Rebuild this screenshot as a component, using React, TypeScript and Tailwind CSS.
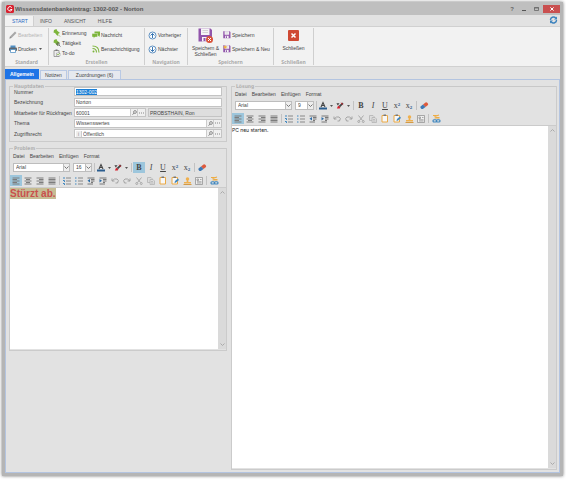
import { useEffect, useRef } from "react";
import clsx from "clsx";

const RIBBON_TABS = ["START", "INFO", "ANSICHT", "HILFE"];
const PAGES = ["Allgemein", "Notizen", "Zuordnungen (6)"];
const EDITOR_MENU = ["Datei", "Bearbeiten", "Einfügen", "Format"];

export default function App() {
  return (
    <div className="h-screen bg-white pt-[2px] pr-[3px] pb-[4px] pl-[2px] font-['Liberation_Sans',Arial,sans-serif] text-[5px] leading-[6px] text-[#444]">
      <div className="flex h-full flex-col border-x-[3px] border-b-[3px] border-[#b5b5b5] bg-[#e2e2e2] shadow-[0_0_3px_#777]">
        <TitleBar />
        <RibbonTabs />
        <Ribbon />
        <PageTabs />
        <main className="flex min-h-0 flex-1 gap-1 border border-[#b3c4e0] pt-[3px] pr-[2px] pb-[2px] pl-[3px]">
          <div className="flex w-[218px] shrink-0 flex-col gap-[3px]">
            <MasterData />
            <Panel title="Problem" className="h-[206px]">
              <Editor name="Problem" size="16" bold>
                <div
                  contentEditable
                  suppressContentEditableWarning
                  role="textbox"
                  aria-label="Problem"
                  className="min-w-0 flex-1 bg-white text-[10px] leading-3 font-bold text-[#c9504c] outline-none"
                >
                  <span className="bg-[#c6bd94]">Stürzt ab.</span>
                </div>
              </Editor>
            </Panel>
          </div>
          <Panel title="Lösung" className="min-w-0 flex-1">
            <Editor name="Lösung" size="9">
              <textarea
                aria-label="Lösung"
                defaultValue="PC neu starten."
                className="min-w-0 flex-1 resize-none bg-white pt-px font-[Inter,sans-serif] text-[5px] leading-[6px] text-[#222] outline-none"
              />
            </Editor>
          </Panel>
        </main>
      </div>
    </div>
  );
}

function TitleBar() {
  return (
    <header className="flex h-[13px] shrink-0 items-center bg-[#bfbfbf]">
      <svg width="8" height="8" viewBox="0 0 16 16" className="mr-px ml-px" aria-hidden="true">
        <rect width="16" height="16" rx="3" fill="#d8202f" />
        <path d="M11.5 5.2A4.3 4.3 0 1 0 12 9H8.5" fill="none" stroke="#fff" strokeWidth="2" />
      </svg>
      <h1 className="flex-1 text-[6px] font-bold text-[#555]">
        Wissensdatenbankeintrag: 1302-002 - Norton
      </h1>
      <button type="button" aria-label="Hilfe" className="w-3 text-[6px] font-bold text-[#666]">
        ?
      </button>
      <button type="button" aria-label="Minimieren" className="grid w-3 place-items-center">
        <svg width="4" height="6" aria-hidden="true">
          <path d="M0 4.5h4" stroke="#555" />
        </svg>
      </button>
      <button type="button" aria-label="Maximieren" className="grid w-[13px] place-items-center">
        <svg width="5" height="4" aria-hidden="true">
          <path d="M.5.5h4v3h-4zM0 1h5" fill="none" stroke="#666" strokeWidth=".8" />
        </svg>
      </button>
      <button
        type="button"
        aria-label="Fenster schließen"
        className="grid h-2 w-[17px] place-items-center bg-[#c94f4f]"
      >
        <svg width="4" height="4" viewBox="0 0 4 4" aria-hidden="true">
          <path d="M.4.4l3.2 3.2M3.6.4L.4 3.6" stroke="#fff" />
        </svg>
      </button>
    </header>
  );
}

function RibbonTabs() {
  return (
    <nav className="flex h-[11px] shrink-0 items-end justify-between">
      <div className="flex">
        {RIBBON_TABS.map((tab, i) => (
          <button
            key={tab}
            type="button"
            className={clsx(
              "h-[10px]",
              i === 0
                ? "border-r border-[#d0d0d0] bg-[#f2f2f2] pr-[5px] pl-[7px] text-[#2b6cc4]"
                : "px-[6px] text-[#555]"
            )}
          >
            {tab}
          </button>
        ))}
      </div>
      <button type="button" aria-label="Aktualisieren" className="mr-[2px] mb-[2px]">
        <svg width="9" height="8" viewBox="0 0 18 16" fill="none" stroke="#3b82bd" strokeWidth="2.8" aria-hidden="true">
          <path d="M3 8a6 5.5 0 0 1 10.5-4M15 8a6 5.5 0 0 1-10.5 4" />
          <path d="M16 1v6h-6zM2 15V9h6z" fill="#3b82bd" stroke="none" />
        </svg>
      </button>
    </nav>
  );
}

function Ribbon() {
  return (
    <div className="flex h-[41px] shrink-0 border-y border-[#d0d0d0] bg-[#f2f2f2] py-px">
      <Group label="Standard" className="w-[44px]">
        <Column className="pl-1">
          <Action icon={<Pencil />} label="Bearbeiten" tall disabled />
          <Action icon={<Printer />} label="Drucken" tall menu />
        </Column>
      </Group>
      <Group label="Erstellen" className="w-[96px]">
        <Column className="w-[43px] pl-1">
          <Action icon={<Pin />} label="Erinnerung" />
          <Action icon={<Pin search />} label="Tätigkeit" />
          <Action icon={<Todo />} label="To-do" />
        </Column>
        <Column>
          <Action icon={<Bubbles />} label="Nachricht" tall />
          <Action icon={<Feed />} label="Benachrichtigung" tall />
        </Column>
      </Group>
      <Group label="Navigation" className="w-[43px]">
        <Column className="pl-[3px]">
          <Action icon={<CircleArrow />} label="Vorheriger" tall />
          <Action icon={<CircleArrow down />} label="Nächster" tall />
        </Column>
      </Group>
      <Group label="Speichern" className="w-[86px]">
        <button type="button" className="flex w-[35px] flex-col items-center gap-[2px]">
          <Floppy size={15} badge="close" />
          <span className="w-[30px]">Speichern &amp; Schließen</span>
        </button>
        <Column>
          <Action icon={<Floppy size={8} />} label="Speichern" tall />
          <Action icon={<Floppy size={8} badge="new" />} label="Speichern & Neu" tall />
        </Column>
      </Group>
      <Group label="Schließen" className="w-[40px]">
        <button type="button" className="flex w-full flex-col items-center gap-1 pt-[2px]">
          <svg width="11" height="11" viewBox="0 0 22 22" aria-hidden="true">
            <rect width="22" height="22" rx="2" fill="#cf4a34" />
            <path d="M7 7l8 8M15 7l-8 8" stroke="#fff" strokeWidth="3" />
          </svg>
          Schließen
        </button>
      </Group>
    </div>
  );
}

function Group({
  label,
  className,
  children,
}: {
  label: string;
  className: string;
  children: React.ReactNode;
}) {
  return (
    <section className={clsx("flex flex-col border-r border-[#cfcfcf]", className)}>
      <div className="flex min-h-0 flex-1">{children}</div>
      <h2 className="text-center font-['Noto_Sans',sans-serif] text-[5px] leading-[5px] font-bold text-[#aaa]">
        {label}
      </h2>
    </section>
  );
}

function Column({ className, children }: { className?: string; children: React.ReactNode }) {
  return <div className={clsx("flex flex-col", className)}>{children}</div>;
}

function Action({
  icon,
  label,
  tall,
  menu,
  disabled,
}: {
  icon: React.ReactNode;
  label: string;
  tall?: boolean;
  menu?: boolean;
  disabled?: boolean;
}) {
  return (
    <button
      type="button"
      disabled={disabled}
      className={clsx(
        "flex items-center gap-px whitespace-nowrap disabled:text-[#b5b5b5]",
        tall ? "h-[14px]" : "h-[10px]"
      )}
    >
      {icon}
      {label}
      {menu && <Caret />}
    </button>
  );
}

function PageTabs() {
  return (
    <nav className="flex h-3 shrink-0 items-end gap-px">
      {PAGES.map((page, i) => (
        <button
          key={page}
          type="button"
          className={clsx(
            i === 0
              ? "h-[10px] bg-[#1f74e6] px-[5px] font-bold text-white"
              : "h-[9px] border border-b-0 border-[#b9c9e4] bg-[#e6e9ef]",
            i === 1 && "px-1",
            i === 2 && "px-[7px]"
          )}
        >
          {page}
        </button>
      ))}
    </nav>
  );
}

function Panel({
  title,
  className,
  children,
}: {
  title: string;
  className?: string;
  children: React.ReactNode;
}) {
  return (
    <section className={clsx("flex flex-col", className)}>
      <div className="flex h-[6px] shrink-0 items-center gap-px">
        <i className="h-px w-1 bg-[#c8c8c8]" />
        <h2 className="font-['DejaVu_Sans_Condensed','DejaVu_Sans',sans-serif] text-[5px] leading-[6px] font-bold text-[#b0b0b0]">
          {title}
        </h2>
        <i className="h-px flex-1 bg-[#c8c8c8]" />
      </div>
      <div className="-mt-[3px] flex min-h-0 flex-1 flex-col border border-t-0 border-[#cbcbcb] pt-[3px]">
        {children}
      </div>
    </section>
  );
}

function MasterData() {
  const number = useRef<HTMLInputElement>(null);

  useEffect(() => {
    number.current?.focus();
    number.current?.select();
  }, []);

  return (
    <Panel title="Hauptdaten">
      <div className="-mt-[2px] flex h-[54px] flex-col justify-between pr-1 pb-[3px] pl-1">
        <Field id="nummer" label="Nummer">
          <Box>
            <input
              ref={number}
              id="nummer"
              defaultValue="1302-002"
              className="w-full outline-none selection:bg-[#1b7fd6] selection:text-white"
            />
          </Box>
        </Field>
        <Field id="bezeichnung" label="Bezeichnung">
          <Box>
            <input id="bezeichnung" defaultValue="Norton" className="w-full outline-none" />
          </Box>
        </Field>
        <Field id="mitarbeiter" label="Mitarbeiter für Rückfragen">
          <div className="w-[72px]">
            <Box lookup>
              <input id="mitarbeiter" defaultValue="60001" className="w-full min-w-0 outline-none" />
            </Box>
          </div>
          <input
            aria-label="Name"
            readOnly
            defaultValue="PROBSTHAIN, Ron"
            className="ml-[2px] h-[9px] min-w-0 flex-1 border border-[#c4c4c4] bg-[#dedede] px-px"
          />
        </Field>
        <Field id="thema" label="Thema">
          <Box lookup>
            <input id="thema" defaultValue="Wissenswertes" className="w-full outline-none" />
          </Box>
        </Field>
        <Field id="zugriff" label="Zugriffsrecht">
          <Box lookup>
            <span className="mr-px w-[7px] border-r border-[#ccc] bg-[#eee] text-center text-[#888]">i</span>
            <input id="zugriff" defaultValue="Öffentlich" className="w-full outline-none" />
          </Box>
        </Field>
      </div>
    </Panel>
  );
}

function Field({ id, label, children }: { id: string; label: string; children: React.ReactNode }) {
  return (
    <div className="flex items-center">
      <label htmlFor={id} className="w-[60px] shrink-0 whitespace-nowrap">
        {label}
      </label>
      {children}
    </div>
  );
}

function Box({ lookup, children }: { lookup?: boolean; children: React.ReactNode }) {
  return (
    <div className="flex h-[9px] w-full items-center border border-[#c4c4c4] bg-white pl-px">
      {children}
      {lookup && (
        <>
          <button type="button" aria-label="Suchen" className="grid h-full w-[7px] shrink-0 place-items-center border-l border-[#ccc] bg-[#f0f0f0]">
            <svg width="5" height="5" viewBox="0 0 10 10" fill="none" stroke="#666" strokeWidth="1.4" aria-hidden="true">
              <circle cx="6" cy="4" r="2.8" />
              <path d="M4 6L1 9.5" />
            </svg>
          </button>
          <button type="button" aria-label="Mehr" className="grid h-full w-[8px] shrink-0 place-items-center border-l border-[#ccc] bg-[#f0f0f0]">
            <svg width="5" height="2" viewBox="0 0 6 2" fill="#888" aria-hidden="true">
              <path d="M0 .5h1.2v1H0zM2.4.5h1.2v1H2.4zM4.8.5H6v1H4.800z" />
            </svg>
          </button>
        </>
      )}
    </div>
  );
}

function Editor({
  name,
  size,
  bold,
  children,
}: {
  name: string;
  size: string;
  bold?: boolean;
  children: React.ReactNode;
}) {
  return (
    <>
      <div className="flex h-[10px] shrink-0 items-center gap-[5px] pl-[3px]">
        {EDITOR_MENU.map((item) => (
          <button key={item} type="button">
            {item}
          </button>
        ))}
      </div>
      <div className="flex h-[13px] shrink-0 items-center pl-[3px]">
        <Dropdown label={`Schriftart ${name}`} value="Arial" className="w-[57px]" />
        <Dropdown label={`Schriftgröße ${name}`} value={size} className="mr-px ml-[3px] w-[19px]" />
        <Sep />
        <button type="button" aria-label="Schriftfarbe" className="flex w-[17px] items-center gap-[2px] pl-px">
          <svg width="8" height="9" viewBox="0 0 16 18" aria-hidden="true">
            <path d="M4 12L8 3l4 9M5.500 9h5" fill="none" stroke="#444" strokeWidth="2.2" />
            <path d="M0 13h16v4H0z" fill="#2a5d8f" />
          </svg>
          <Caret />
        </button>
        <button type="button" aria-label="Hervorheben" className="flex w-[17px] items-center gap-[2px] pl-px">
          <svg width="8" height="9" viewBox="0 0 18 18" aria-hidden="true">
            <path d="M1 4h7l-4 5zM6 10L14 2l3 3-8 8z" fill="#444" />
            <path d="M5 9l5 5-2 2H2z" fill="#d6202c" />
            <path d="M11 3l5 4" stroke="#d6202c" strokeWidth="2" />
          </svg>
          <Caret />
        </button>
        <Sep />
        <Tool label="Fett" active={bold}>
          <b>B</b>
        </Tool>
        <Tool label="Kursiv">
          <i>I</i>
        </Tool>
        <Tool label="Unterstrichen">
          <u>U</u>
        </Tool>
        <Tool label="Hochgestellt">
          <span>
            x<sup className="text-[5px] font-bold text-[#2a5d8f]">2</sup>
          </span>
        </Tool>
        <Tool label="Tiefgestellt">
          <span>
            x<sub className="text-[5px] font-bold text-[#2a5d8f]">2</sub>
          </span>
        </Tool>
        <Sep />
        <Tool label="Formatierung löschen">
          <svg width="10" height="8" viewBox="0 0 20 16" aria-hidden="true">
            <path d="M8 5l5-4q2-1 4 1t1 4l-5 4z" fill="#df5a3c" />
            <path d="M8 5l5 5-4 3q-3 2-5 0t-1-4z" fill="#3d78b5" />
          </svg>
        </Tool>
      </div>
      <div className="flex h-[13px] shrink-0 items-center">
        <Tool label="Linksbündig" active>
          <Lines d="M1 2h14M1 5h9M1 8h14M1 11h9M1 14h14" />
        </Tool>
        <Tool label="Zentriert">
          <Lines d="M1 2h14M4 5h8M1 8h14M4 11h8M1 14h14" />
        </Tool>
        <Tool label="Rechtsbündig">
          <Lines d="M1 2h14M6 5h9M1 8h14M6 11h9M1 14h14" />
        </Tool>
        <Tool label="Blocksatz">
          <Lines d="M1 2h14M1 5h14M1 8h14M1 11h14M1 14h14" />
        </Tool>
        <Sep />
        <Tool label="Nummerierung">
          <ListIcon marks="M2 0v4M0 7h3v3M0 13h3v3" />
        </Tool>
        <Tool label="Aufzählung">
          <ListIcon marks="M0 2h3M0 8h3M0 14h3" />
        </Tool>
        <Tool label="Einzug verkleinern">
          <IndentIcon arrow="M6 4v7L1 7.500z" />
        </Tool>
        <Tool label="Einzug vergrößern">
          <IndentIcon arrow="M1 4v7l5-3.500z" />
        </Tool>
        <Tool label="Rückgängig">
          <Undo />
        </Tool>
        <Tool label="Wiederholen">
          <Undo redo />
        </Tool>
        <Tool label="Ausschneiden">
          <svg width="8" height="8" viewBox="0 0 16 16" fill="none" stroke="#a3a3a3" strokeWidth="1.8" aria-hidden="true">
            <path d="M3 1l8 10M13 1L5 11" />
            <circle cx="3.5" cy="13" r="2" />
            <circle cx="12.5" cy="13" r="2" />
          </svg>
        </Tool>
        <Tool label="Kopieren">
          <svg width="8" height="8" viewBox="0 0 16 16" fill="#ddd" stroke="#b0b0b0" strokeWidth="1.5" aria-hidden="true">
            <path d="M1 1h7l2 2v8H1z" />
            <path d="M6 5h6l3 3v7H6zM8 9h4M8 12h5" />
          </svg>
        </Tool>
        <Tool label="Einfügen">
          <Clipboard />
        </Tool>
        <Tool label="Inhalte einfügen">
          <Clipboard pen />
        </Tool>
        <Tool label="Stempel">
          <svg width="9" height="8" viewBox="0 0 18 16" fill="#efb04e" aria-hidden="true">
            <circle cx="9" cy="4" r="3.5" />
            <path d="M8 6h2l1 4h5v3H2v-3h5z" />
            <path d="M1 14h16v2H1z" fill="#d39a46" />
          </svg>
        </Tool>
        <Tool label="Textbaustein">
          <svg width="8" height="8" viewBox="0 0 16 16" fill="#eee" stroke="#8a8a8a" strokeWidth="1.4" aria-hidden="true">
            <path d="M1 1h14v14H1z" />
            <path d="M4 4h3v3H4zM10 5h3M4 9.500h9M4 12h9" />
          </svg>
        </Tool>
        <Sep />
        <Tool label="Verknüpfung">
          <svg width="9" height="9" viewBox="0 0 18 18" fill="none" strokeWidth="2.4" aria-hidden="true">
            <path d="M2 3h6v4h7M5 5l9-3M5 8h10" stroke="#edac43" />
            <rect x="2" y="11.5" width="7" height="4.5" rx="2" stroke="#3f86be" />
            <rect x="9" y="11.5" width="7" height="4.5" rx="2" stroke="#3f86be" />
          </svg>
        </Tool>
      </div>
      <div className="flex min-h-0 flex-1 border-t border-[#cbcbcb] pb-px">
        {children}
        <div className="flex w-2 shrink-0 flex-col items-center justify-between bg-[#dadada] py-[3px]">
          <ScrollArrow d="M.5 2.500L2.500.5l2 2" />
          <ScrollArrow d="M.5.5l2 2 2-2" />
        </div>
      </div>
    </>
  );
}

function Dropdown({ label, value, className }: { label: string; value: string; className: string }) {
  return (
    <div className={clsx("relative h-[9px] shrink-0", className)}>
      <select
        aria-label={label}
        defaultValue={value}
        className="block h-full w-full appearance-none border border-[#bdbdbd] bg-white pl-[2px] leading-[7px] outline-none"
      >
        <option>{value}</option>
      </select>
      <span className="pointer-events-none absolute inset-y-0 right-0 grid w-[7px] place-items-center border border-[#bdbdbd] bg-[#eee]">
        <ScrollArrow d="M.5.5l2 2 2-2" dark />
      </span>
    </div>
  );
}

function Tool({ label, active, children }: { label: string; active?: boolean; children: React.ReactNode }) {
  return (
    <button
      type="button"
      aria-label={label}
      aria-pressed={active}
      className={clsx(
        "grid h-[11px] w-3 shrink-0 place-items-center font-['Liberation_Serif',serif] text-[8px] leading-[9px] text-[#444]",
        active && "bg-[#9dc6dc]"
      )}
    >
      {children}
    </button>
  );
}

function Sep() {
  return <i className="mx-px h-[9px] w-px shrink-0 bg-[#c2c2c2]" />;
}

function Caret() {
  return (
    <svg width="3" height="2" viewBox="0 0 3 2" className="ml-px" aria-hidden="true">
      <path d="M0 0h3L1.500 2z" fill="#555" />
    </svg>
  );
}

function ScrollArrow({ d, dark }: { d: string; dark?: boolean }) {
  return (
    <svg width="5" height="3" viewBox="0 0 5 3" fill="none" stroke={dark ? "#777" : "#aaa"} aria-hidden="true">
      <path d={d} />
    </svg>
  );
}

function Lines({ d }: { d: string }) {
  return (
    <svg width="8" height="8" viewBox="0 0 16 16" stroke="#7c7c7c" strokeWidth="2" aria-hidden="true">
      <path d={d} />
    </svg>
  );
}

function ListIcon({ marks }: { marks: string }) {
  return (
    <svg width="8" height="8" viewBox="0 0 16 16" fill="none" strokeWidth="2" aria-hidden="true">
      <path d={marks} stroke="#3f86be" />
      <path d="M6 2h10M6 8h10M6 14h10" stroke="#888" />
    </svg>
  );
}

function IndentIcon({ arrow }: { arrow: string }) {
  return (
    <svg width="8" height="8" viewBox="0 0 16 16" aria-hidden="true">
      <path d="M1 2h14M8 5h7M8 8h7M8 11h4M1 14h11" stroke="#6c6c6c" strokeWidth="1.8" />
      <path d={arrow} fill="#2d6da8" />
    </svg>
  );
}

function Undo({ redo }: { redo?: boolean }) {
  return (
    <svg width="8" height="7" viewBox="0 0 16 14" fill="none" stroke="#a3a3a3" strokeWidth="2" aria-hidden="true">
      {redo ? (
        <path d="M14 3v5H9M14 8Q9 2 4 4t-1 8h4" />
      ) : (
        <path d="M2 3v5h5M2 8q5-6 10-4t1 8H9" />
      )}
    </svg>
  );
}

function Clipboard({ pen }: { pen?: boolean }) {
  return (
    <svg width="8" height="9" viewBox="0 0 16 18" aria-hidden="true">
      <path d="M2 3h11v13H2z" fill="#f7f7f7" stroke="#eba944" strokeWidth="2" />
      <path d="M5 1h5v3H5z" fill="#777" />
      {pen && <path d="M7 14l1-4 6-5 2 3-6 5z" fill="#3f86be" />}
    </svg>
  );
}

function Pencil() {
  return (
    <svg width="8" height="8" viewBox="0 0 16 16" aria-hidden="true">
      <path d="M1 15l1-4L12 1l3 3L5 14z" fill="#a8a8a8" />
      <path d="M1 15l1-3 2 2z" fill="#777" />
    </svg>
  );
}

function Printer() {
  return (
    <svg width="8" height="8" viewBox="0 0 16 16" aria-hidden="true">
      <path d="M3 1h10v5H3z" fill="#4e8fc4" />
      <rect y="5" width="16" height="7" rx="2" fill="#5c6670" />
      <path d="M3 9h10v6H3z" fill="#fff" stroke="#4e8fc4" strokeWidth="1.5" />
    </svg>
  );
}

function Pin({ search }: { search?: boolean }) {
  return (
    <svg width="8" height="8" viewBox="0 0 16 16" aria-hidden="true">
      <path d="M2 2l5-2 1 3 6 5-3 1-2 5-5-6-3-1z" fill="#7db53c" />
      {search ? (
        <g fill="none" stroke="#555" strokeWidth="1.6">
          <circle cx="10" cy="10" r="2.5" />
          <path d="M12 12l3 3" />
        </g>
      ) : (
        <path d="M10 11l4 4" stroke="#7db53c" strokeWidth="1.5" />
      )}
    </svg>
  );
}

function Todo() {
  return (
    <svg width="8" height="8" viewBox="0 0 16 16" fill="none" aria-hidden="true">
      <path d="M2 3h10v12H2z" fill="#eee" stroke="#888" strokeWidth="1.5" />
      <path d="M5 1h4v3H5z" fill="#777" />
      <path d="M7 8h7v6H7z" fill="#fff" stroke="#888" />
      <path d="M8 10l2 2 4-4" stroke="#7db53c" strokeWidth="1.5" />
    </svg>
  );
}

function Bubbles() {
  return (
    <svg width="8" height="8" viewBox="0 0 16 16" fill="#7db53c" aria-hidden="true">
      <path d="M5 1h11v8h-1v3l-3-3H5z" />
      <path d="M0 5h11v7H6l-3 3v-3H0z" stroke="#f2f2f2" strokeWidth=".8" />
    </svg>
  );
}

function Feed() {
  return (
    <svg width="8" height="8" viewBox="0 0 16 16" fill="none" stroke="#7db53c" strokeWidth="2.2" aria-hidden="true">
      <path d="M1 2q13 0 13 13M1 7q8 0 8 8" />
      <circle cx="3" cy="13" r="2" fill="#7db53c" stroke="none" />
    </svg>
  );
}

function CircleArrow({ down }: { down?: boolean }) {
  return (
    <svg width="9" height="9" viewBox="0 0 18 18" fill="none" stroke="#3976b3" aria-hidden="true">
      <circle cx="9" cy="9" r="7" fill="#fff" strokeWidth="1.6" />
      <path d={down ? "M9 4v9M5 9l4 4 4-4" : "M9 14V5M5 9l4-4 4 4"} strokeWidth="2" />
    </svg>
  );
}

function Floppy({ size, badge }: { size: number; badge?: "close" | "new" }) {
  return (
    <svg width={size} height={size} viewBox="0 0 30 30" aria-hidden="true">
      <path d="M1 1h24l3 3v23H1z" fill="#9155ab" />
      <path d="M6 1h17v13H6z" fill="#f6f6f6" />
      <path d="M9 5h11M9 9h11" stroke="#c9c9c9" strokeWidth="1.5" />
      <path d="M8 18h13v9H8z" fill="#f6f6f6" />
      <path d="M11 20h4v6h-4z" fill="#9155ab" />
      {badge === "close" && (
        <>
          <circle cx="23" cy="23" r="7" fill="#d9533a" />
          <path d="M20 20l6 6M26 20l-6 6" stroke="#fff" strokeWidth="2" />
        </>
      )}
      {badge === "new" && (
        <path d="M8 0l2 5 5-1-3 4 3 4-5-1-2 5-2-5-5 1 3-4-3-4 5 1z" fill="#f0b040" />
      )}
    </svg>
  );
}
